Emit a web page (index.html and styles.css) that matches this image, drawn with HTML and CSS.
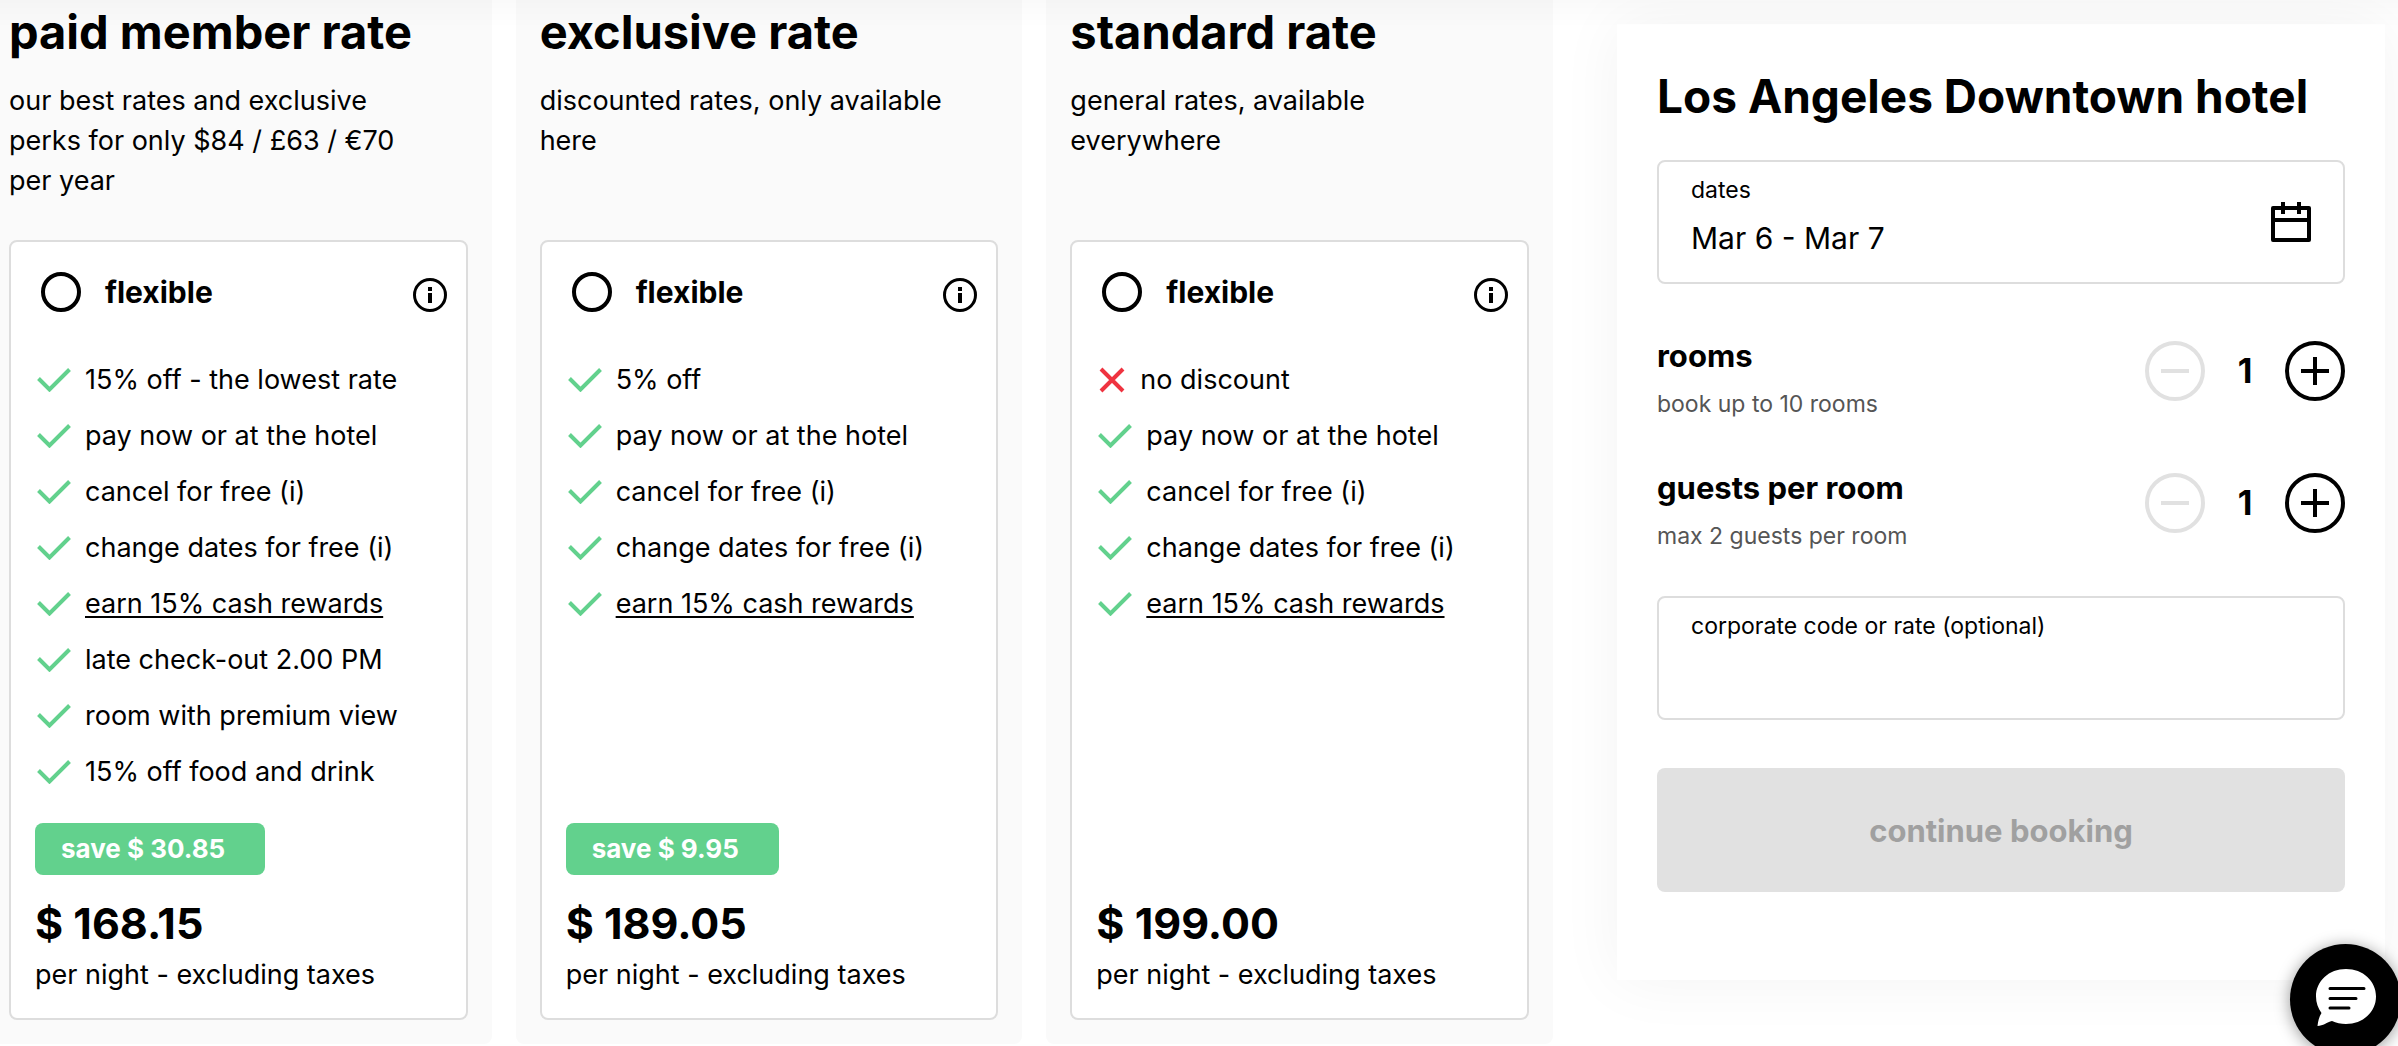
FILE: index.html
```html
<!DOCTYPE html>
<html lang="en">
<head>
  <meta charset="UTF-8">
  <title>Los Angeles Downtown hotel - rates</title>
  <meta name="viewport" content="width=device-width, initial-scale=1">
  <link rel="stylesheet" href="styles.css">
</head>
<body>
  <!-- shared icons -->
  <svg class="sprite" aria-hidden="true">
    <symbol id="check" viewBox="0 0 34 24">
      <path d="M1.5 10.5 12.5 21.5 32.5 1.5" fill="none" stroke="currentColor" stroke-width="4"/>
    </symbol>
    <symbol id="cross" viewBox="0 0 28 28">
      <path d="M3 3 25 25M25 3 3 25" fill="none" stroke="currentColor" stroke-width="4"/>
    </symbol>
    <symbol id="info" viewBox="0 0 34 34">
      <circle cx="17" cy="17" r="15.5" fill="none" stroke="currentColor" stroke-width="3"/>
      <path d="M15 9h4v4h-4zM15 15h4v10h-4z" fill="currentColor"/>
    </symbol>
  </svg>

  <div class="top-shadow"></div>

  <main class="page">
    <div class="rates">
      <section class="rate">
        <h2>paid member rate</h2>
        <p class="description">our best rates and exclusive perks for only $84 / £63 / €70 per year</p>
        <div class="card">
          <div class="card-head">
            <label class="option"><input type="radio" name="rate" value="member">flexible</label>
            <button class="info-btn" type="button" aria-label="Rate details"><svg><use href="#info"/></svg></button>
          </div>
          <ul class="perks">
            <li><svg class="check"><use href="#check"/></svg>15% off - the lowest rate</li>
            <li><svg class="check"><use href="#check"/></svg>pay now or at the hotel</li>
            <li><svg class="check"><use href="#check"/></svg>cancel for free (i)</li>
            <li><svg class="check"><use href="#check"/></svg>change dates for free (i)</li>
            <li><svg class="check"><use href="#check"/></svg><a href="#">earn 15% cash rewards</a></li>
            <li><svg class="check"><use href="#check"/></svg>late check-out 2.00 PM</li>
            <li><svg class="check"><use href="#check"/></svg>room with premium view</li>
            <li><svg class="check"><use href="#check"/></svg>15% off food and drink</li>
          </ul>
          <div class="card-foot">
            <span class="save">save $ 30.85</span>
            <div class="price">$ 168.15</div>
            <div class="per-night">per night - excluding taxes</div>
          </div>
        </div>
      </section>

      <section class="rate">
        <h2>exclusive rate</h2>
        <p class="description">discounted rates, only available here</p>
        <div class="card">
          <div class="card-head">
            <label class="option"><input type="radio" name="rate" value="exclusive">flexible</label>
            <button class="info-btn" type="button" aria-label="Rate details"><svg><use href="#info"/></svg></button>
          </div>
          <ul class="perks">
            <li><svg class="check"><use href="#check"/></svg>5% off</li>
            <li><svg class="check"><use href="#check"/></svg>pay now or at the hotel</li>
            <li><svg class="check"><use href="#check"/></svg>cancel for free (i)</li>
            <li><svg class="check"><use href="#check"/></svg>change dates for free (i)</li>
            <li><svg class="check"><use href="#check"/></svg><a href="#">earn 15% cash rewards</a></li>
          </ul>
          <div class="card-foot">
            <span class="save">save $ 9.95</span>
            <div class="price">$ 189.05</div>
            <div class="per-night">per night - excluding taxes</div>
          </div>
        </div>
      </section>

      <section class="rate">
        <h2>standard rate</h2>
        <p class="description">general rates, available everywhere</p>
        <div class="card">
          <div class="card-head">
            <label class="option"><input type="radio" name="rate" value="standard">flexible</label>
            <button class="info-btn" type="button" aria-label="Rate details"><svg><use href="#info"/></svg></button>
          </div>
          <ul class="perks">
            <li><svg class="cross"><use href="#cross"/></svg>no discount</li>
            <li><svg class="check"><use href="#check"/></svg>pay now or at the hotel</li>
            <li><svg class="check"><use href="#check"/></svg>cancel for free (i)</li>
            <li><svg class="check"><use href="#check"/></svg>change dates for free (i)</li>
            <li><svg class="check"><use href="#check"/></svg><a href="#">earn 15% cash rewards</a></li>
          </ul>
          <div class="card-foot">
            <div class="price">$ 199.00</div>
            <div class="per-night">per night - excluding taxes</div>
          </div>
        </div>
      </section>
    </div>

    <form class="booking">
      <h2>Los Angeles Downtown hotel</h2>
      <div class="field">
        <div class="field-text">
          <label for="dates">dates</label>
          <input id="dates" type="text" value="Mar 6 - Mar 7" readonly>
        </div>
        <svg class="calendar" viewBox="0 0 40 40">
          <path d="M2 6h36v32H2zM2 18h36M12 0v12M28 0v12" fill="none" stroke="#000" stroke-width="4" stroke-linejoin="round"/>
        </svg>
      </div>

      <div class="counters">
        <div class="counter">
          <div>
            <h3>rooms</h3>
            <p>book up to 10 rooms</p>
          </div>
          <div class="stepper">
            <button type="button" aria-label="Fewer rooms" disabled><svg viewBox="0 0 28 28"><path d="M0 14h28"/></svg></button>
            <output>1</output>
            <button type="button" aria-label="More rooms"><svg viewBox="0 0 28 28"><path d="M0 14h28M14 0v28"/></svg></button>
          </div>
        </div>

        <div class="counter">
          <div>
            <h3>guests per room</h3>
            <p>max 2 guests per room</p>
          </div>
          <div class="stepper">
            <button type="button" aria-label="Fewer guests" disabled><svg viewBox="0 0 28 28"><path d="M0 14h28"/></svg></button>
            <output>1</output>
            <button type="button" aria-label="More guests"><svg viewBox="0 0 28 28"><path d="M0 14h28M14 0v28"/></svg></button>
          </div>
        </div>
      </div>

      <div class="field">
        <div class="field-text">
          <label for="code">corporate code or rate (optional)</label>
          <input id="code" type="text">
        </div>
      </div>

      <button class="continue" type="submit" disabled>continue booking</button>
    </form>
  </main>

  <button class="chat" type="button" aria-label="Chat">
    <svg viewBox="0 0 60 58">
      <path d="M30 0C47 0 60 12 60 27.500C60 43 47 55 30 55C25 55 20 54 16 52C11 53 7 57 1.500 57C2 52 3 48 5.500 44C2 39 0 34 0 27.500C0 12 13 0 30 0Z" fill="#fff"/>
      <path d="M14 19.500h34M14 29.500h26M14 39h19" stroke="#000" stroke-width="3" stroke-linecap="round"/>
    </svg>
  </button>
</body>
</html>
```

FILE: styles.css
```css
* {
  box-sizing: border-box;
}
body {
  margin: 0;
  font-family: Inter, Arial, sans-serif;
  font-size: 27px;
  line-height: 40px;
  color: #000;
  background: #fff;
}
h2, h3, p, ul {
  margin: 0;
  padding: 0;
}
button, input {
  font-family: inherit;
  color: inherit;
}
button {
  border: none;
  padding: 0;
  background: none;
  cursor: pointer;
}
h2 {
  font-size: 46px;
  line-height: 56px;
  font-weight: 700;
}
.sprite {
  display: none;
}
.top-shadow {
  position: fixed;
  top: 0;
  left: 0;
  right: 0;
  height: 28px;
  background: linear-gradient(#00000005, #0000);
  pointer-events: none;
}
.page {
  display: grid;
  grid-template-columns: minmax(0, 1568fr) minmax(0, 768fr);
  gap: 64px;
  align-items: start;
  margin: 0 13px 0 -15px;
}

/* Rate columns */
.rates {
  display: grid;
  grid-template-columns: repeat(3, minmax(0, 1fr));
  gap: 24px;
}
.rate {
  display: flex;
  flex-direction: column;
  padding: 4px 24px 24px;
  background: #fafafa;
  border-radius: 0 0 8px 8px;
}
.rate h2 {
  font-size: 47px;
}
.description {
  min-height: 120px;
  margin: 21px 0 39px;
  padding-right: 32px;
}
.card {
  flex: 1;
  display: flex;
  flex-direction: column;
  padding: 30px 24px 23px;
  background: #fff;
  border: 2px solid #ddd;
  border-radius: 8px;
}
.card-head {
  display: flex;
  justify-content: space-between;
  align-items: flex-end;
  margin: 0 -5px 40px 6px;
}
.option {
  display: flex;
  align-items: center;
  gap: 24px;
  font-size: 30px;
  font-weight: 700;
}
.option input {
  appearance: none;
  width: 40px;
  height: 40px;
  margin: 0;
  border: 4px solid #000;
  border-radius: 50%;
}
.option input:checked {
  background: #000;
  box-shadow: inset 0 0 0 6px #fff;
}
.info-btn {
  width: 34px;
  height: 34px;
}
.info-btn svg {
  display: block;
  width: 34px;
  height: 34px;
}
.perks {
  list-style: none;
}
.perks li {
  display: flex;
  align-items: center;
  gap: 14px;
  height: 56px;
  padding-left: 2px;
}
.perks a {
  color: inherit;
  text-underline-offset: 3px;
  text-decoration-thickness: 2px;
}
.check {
  width: 34px;
  height: 24px;
  color: #62d18d;
}
.cross {
  width: 28px;
  height: 28px;
  color: #ef3340;
}
.card-foot {
  margin-top: auto;
  padding-top: 23px;
}
.save {
  display: inline-block;
  padding: 6px 40px 6px 26px;
  font-size: 26px;
  font-weight: 700;
  color: #fff;
  background: #62d18d;
  border-radius: 8px;
}
.price {
  margin-top: 16px;
  font-size: 43px;
  line-height: 64px;
  font-weight: 700;
}

/* Booking panel */
.booking {
  margin-top: 24px;
  padding: 44px 40px 88px;
  background: #fff;
  box-shadow: 0 0 60px #0000000d;
}
.booking h2 {
  margin-bottom: 36px;
}
.field {
  display: flex;
  justify-content: space-between;
  align-items: center;
  height: 124px;
  padding: 0 32px;
  border: 2px solid #ddd;
  border-radius: 8px;
}
.field-text {
  flex: 1;
  display: flex;
  flex-direction: column;
}
.field label {
  font-size: 23px;
  line-height: 32px;
}
.field input {
  width: 100%;
  height: 64px;
  padding: 0;
  border: none;
  outline: none;
  font-size: 30px;
  background: none;
}
.calendar {
  width: 40px;
  height: 40px;
}
.counters {
  display: grid;
  gap: 36px;
  padding: 48px 0 36px;
}
.counter {
  display: flex;
  justify-content: space-between;
  align-items: flex-start;
}
.counter h3 {
  font-size: 31px;
  line-height: 48px;
  font-weight: 700;
}
.counter p {
  font-size: 23px;
  line-height: 48px;
  color: #555;
}
.stepper {
  display: flex;
  align-items: center;
  padding-top: 9px;
}
.stepper output {
  width: 80px;
  text-align: center;
  font-size: 34px;
  font-weight: 700;
}
.stepper button {
  display: flex;
  align-items: center;
  justify-content: center;
  width: 60px;
  height: 60px;
  border: 4px solid #000;
  border-radius: 50%;
}
.stepper button:disabled {
  border-color: #e1e1e1;
  color: #e1e1e1;
}
.stepper svg {
  width: 28px;
  height: 28px;
  stroke: currentColor;
  stroke-width: 4;
}
.continue {
  width: 100%;
  height: 124px;
  margin-top: 48px;
  font-size: 31px;
  font-weight: 700;
  color: #a0a0a0;
  background: #e1e1e1;
  border-radius: 8px;
}

.chat {
  position: fixed;
  right: -3px;
  bottom: -9px;
  width: 111px;
  height: 111px;
  background: #000;
  border-radius: 50%;
  box-shadow: 0 2px 16px #0006;
}
.chat svg {
  width: 60px;
  height: 58px;
}
```
